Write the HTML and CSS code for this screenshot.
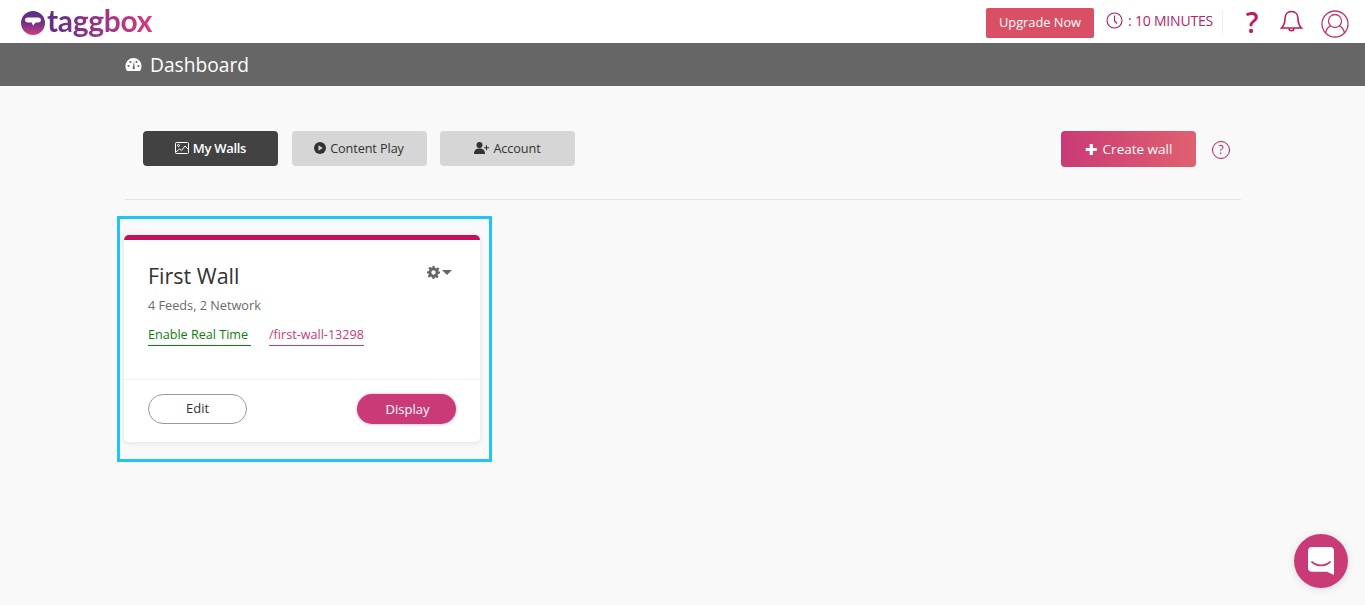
FILE: index.html
```html
<!DOCTYPE html>
<html lang="en">
<head>
<meta charset="utf-8">
<title>Taggbox Dashboard</title>
<link rel="stylesheet" href="styles.css">
</head>
<body>
<header class="topbar">
  <a class="logo">
    <svg class="logo-mark" width="24" height="24" viewBox="0 0 24 24">
      <defs><linearGradient id="lg" x1="0" y1="0" x2="0" y2="1"><stop offset="0" stop-color="#5b2d86"/><stop offset=".55" stop-color="#7a3088"/><stop offset="1" stop-color="#d0407f"/></linearGradient></defs>
      <circle cx="12" cy="12" r="12" fill="url(#lg)"/>
      <path d="M6.500 6.500h11a2.300 2.300 0 0 1 0 5h-2.800l-2.700 3.200-1.300-3.200H6.500a2.500 2.500 0 0 1 0-5z" fill="#fff"/>
    </svg>
    <span class="logo-text">taggbox</span>
  </a>
  <div class="top-actions">
    <a class="upgrade">Upgrade Now</a>
    <span class="timer">
      <svg width="17" height="17" viewBox="0 0 17 17" fill="none" stroke="#c2185b" stroke-width="1.100"><circle cx="8.500" cy="8.500" r="7.500"/><path d="M8.500 3.500v5.500l2.500 2.500"/></svg>
      <span>: 10 MINUTES</span>
    </span>
    <span class="sep"></span>
    <span class="help">?</span>
    <svg class="bell" width="23" height="24" viewBox="0 0 23 24" fill="none" stroke="#c2185b" stroke-width="1.600"><path d="M11.500 1.500c-4 0-6.500 3-6.500 7 0 5-1.500 7.500-3.500 9.500h20c-2-2-3.500-4.500-3.500-9.500 0-4-2.500-7-6.500-7z"/><path d="M9 18.500c0 3 5 3 5 0"/></svg>
    <svg class="user" width="28" height="28" viewBox="0 0 28 28" fill="none" stroke="#c2386f" stroke-width="1.300"><circle cx="14" cy="14" r="13"/><circle cx="14" cy="11" r="6.500"/><path d="M4.500 23c1-4.500 3.500-6.500 5.500-7.300M23.500 23c-1-4.500-3.500-6.500-5.500-7.300"/></svg>
  </div>
</header>
<div class="titlebar">
  <svg width="17" height="15" viewBox="0 0 17 15"><path d="M8.500 1a8 8 0 0 0-8 8c0 2 .6 3.700 1.600 5h12.800c1-1.300 1.600-3 1.600-5a8 8 0 0 0-8-8z" fill="#fff"/><circle cx="3.500" cy="9" r="1.100" fill="#666"/><circle cx="5.500" cy="5" r="1.100" fill="#666"/><circle cx="11.500" cy="5" r="1.100" fill="#666"/><circle cx="13.500" cy="9" r="1.100" fill="#666"/><path d="M7.500 12l1.500-8 .8 8z" fill="#666"/></svg>
  <h1>Dashboard</h1>
</div>
<main class="content">
  <div class="toolbar">
    <nav class="tabs">
      <a class="tab tab-active">
        <svg width="14" height="12" viewBox="0 0 14 12" fill="none" stroke="#fff"><rect x=".5" y=".5" width="13" height="11" rx="1"/><circle cx="3.500" cy="3.500" r="1" /><path d="M1 10l3.500-3 2 1.500L10 4l3.500 3.500"/></svg>
        My Walls
      </a>
      <a class="tab">
        <svg width="12" height="12" viewBox="0 0 12 12"><circle cx="6" cy="6" r="6" fill="#333"/><path d="M4.500 3.200l4.200 2.800-4.200 2.800z" fill="#d6d6d6"/></svg>
        Content Play
      </a>
      <a class="tab">
        <svg width="15" height="12" viewBox="0 0 15 12" fill="#333"><circle cx="5.500" cy="3" r="3"/><path d="M0 12c0-4 2-5.500 5.500-5.500S11 8 11 12z"/><path d="M10 5.200h1.900V3.300h1.100v1.900H15v1.100h-2v2h-1.100v-2H10z"/></svg>
        Account
      </a>
    </nav>
    <div class="create">
      <a class="create-btn"><span class="plus">&#x271A;</span>Create wall</a>
      <span class="qmark">?</span>
    </div>
  </div>
  <div class="highlight">
    <article class="card">
      <div class="card-body">
        <div class="card-head">
          <h2>First Wall</h2>
          <span class="gear">
            <svg width="13" height="13" viewBox="0 0 24 24" fill="#666"><path d="M10 0h4l.7 3.400 2.300 1 2.900-1.900 2.800 2.800-1.900 2.900 1 2.300L24 10v4l-3.400.7-1 2.300 1.900 2.900-2.800 2.800-2.900-1.900-2.300 1L13.800 24h-3.600l-.7-3.400-2.300-1-2.900 1.900-2.800-2.800 1.900-2.900-1-2.300L0 14v-4l3.400-.7 1-2.300-1.900-2.900 2.800-2.800 2.900 1.900 2.300-1zM12 8a4 4 0 1 0 0 8 4 4 0 0 0 0-8z"/></svg>
            <i class="caret"></i>
          </span>
        </div>
        <p class="meta">4 Feeds, 2 Network</p>
        <div class="links">
          <a class="link-green">Enable Real Time</a>
          <a class="link-pink">/first-wall-13298</a>
        </div>
      </div>
      <div class="card-foot">
        <a class="btn-edit">Edit</a>
        <a class="btn-display">Display</a>
      </div>
    </article>
  </div>
</main>
<button class="chat" aria-label="Chat">
  <svg width="26" height="28" viewBox="0 0 26 28"><path d="M4 0h18a4 4 0 0 1 4 4v24l-7-3.200H4a4 4 0 0 1-4-4V4a4 4 0 0 1 4-4z" fill="#fff"/><path d="M4 15c5 4.500 13 4.500 18 0" fill="none" stroke="#c93a76" stroke-width="1.800" stroke-linecap="round"/></svg>
</button>
</body>
</html>
```

FILE: styles.css
```css
* { box-sizing: border-box; }
html, body { margin: 0; padding: 0; }
body {
  height: 605px;
  overflow: hidden;
  background: #f9f9f9;
  font-family: "Open Sans", "Noto Sans", sans-serif;
  color: #333;
}
a { text-decoration: none; }

.topbar {
  height: 43px;
  background: #fff;
  display: flex;
  align-items: center;
  justify-content: space-between;
  padding: 0 16px 0 21px;
}
.logo { display: flex; align-items: flex-start; gap: 2px; height: 43px; }
.logo-mark { flex: none; margin-top: 11px; }
.logo-text {
  font-family: "Lato", sans-serif;
  font-weight: 700;
  font-size: 30px;
  line-height: 34px;
  letter-spacing: -0.3px;
  margin-top: 3px;
  background: linear-gradient(90deg, #5d2e86, #d83a80);
  -webkit-background-clip: text;
  background-clip: text;
  color: transparent;
}
.top-actions { display: flex; align-items: center; }
.upgrade {
  width: 108px;
  height: 30px;
  margin-top: 2px;
  padding-bottom: 2px;
  border-radius: 2px;
  background: #d95064;
  color: #fff;
  font-size: 12.800px;
  display: flex;
  align-items: center;
  justify-content: center;
}
.timer {
  display: flex;
  align-items: center;
  gap: 5px;
  margin-left: 12px;
  margin-top: -2px;
  color: #b5236a;
  font-size: 14px;
  letter-spacing: -0.2px;
}
.sep { width: 1px; height: 24px; background: #eee; margin-left: 9px; }
.help {
  width: 20px;
  margin-left: 19px;
  color: #c2185b;
  font-size: 28px;
  line-height: 36px;
  font-weight: 600;
  text-align: center;
}
.bell { margin-left: 18px; margin-top: 1px; }
.user { margin-left: 18px; margin-top: 5px; }

.titlebar {
  height: 43px;
  background: #666;
  color: #fff;
  display: flex;
  align-items: center;
  gap: 8px;
  padding-left: 125px;
}
.titlebar h1 { margin: 0; font-size: 19.200px; font-weight: 400; }

.content { padding: 45px 124px 0 125px; }
.toolbar {
  height: 69px;
  border-bottom: 1px solid #e5e5e5;
  display: flex;
  justify-content: space-between;
  padding: 0 0 0 18px;
}
.tabs { display: flex; gap: 13.500px; height: 35px; }
.tab {
  width: 135px;
  height: 35px;
  padding-bottom: 2px;
  border-radius: 4px;
  background: #d6d6d6;
  color: #333;
  font-size: 12.700px;
  letter-spacing: -0.1px;
  display: flex;
  align-items: center;
  justify-content: center;
  gap: 4px;
}
.tab-active { background: #424242; color: #fff; font-weight: 600; letter-spacing: -0.3px; font-size: 13px; }
.create { display: flex; align-items: flex-start; margin-right: 11px; }
.create-btn {
  width: 135px;
  height: 36px;
  border-radius: 4px;
  background: linear-gradient(90deg, #c93a76, #e0616f);
  color: #fff;
  font-size: 13.500px;
  display: flex;
  align-items: center;
  justify-content: center;
  gap: 5px;
}
.plus { font-size: 15px; line-height: 18px; }
.qmark {
  width: 18px;
  height: 18px;
  margin: 10px 0 0 16px;
  border: 1px solid #c2185b;
  border-radius: 50%;
  color: #c2185b;
  font-size: 12px;
  line-height: 16px;
  text-align: center;
}

.highlight {
  width: 375px;
  height: 246px;
  margin: 16px 0 0 -8px;
  border: 3px solid #1fc6f4;
  padding: 16px 9px 0 4px;
}
.card {
  height: 207px;
  background: #fff;
  border-top: 5px solid #c2105c;
  border-radius: 5px;
  box-shadow: 0 1px 6px rgba(0, 0, 0, 0.1);
  display: flex;
  flex-direction: column;
}
.card-body { height: 140px; padding: 20px 24px 0; border-bottom: 1px solid #f2f2f2; }
.card-head { display: flex; justify-content: space-between; }
.card-head h2 { margin: 0; font-size: 21.500px; line-height: 32px; font-weight: 400; color: #333; }
.gear { display: flex; align-items: center; gap: 2px; height: 16px; margin: 4px 4px 0 0; }
.caret { width: 0; height: 0; border: 5px solid transparent; border-top: 5px solid #666; border-bottom: 0; }
.meta { margin: 4px 0 0; font-size: 12.700px; line-height: 18px; color: #6b6b6b; }
.links { display: flex; gap: 18px; margin-top: 12px; font-size: 12.600px; line-height: 18px; }
.link-green { color: #0c800c; border-bottom: 1px solid #0c800c; padding-bottom: 1px; width: 103px; }
.link-pink { color: #c93a76; border-bottom: 1px solid #c93a76; padding-bottom: 1px; }
.card-foot {
  flex: 1;
  display: flex;
  justify-content: space-between;
  padding: 14px 24px 0 24px;
}
.btn-edit, .btn-display {
  width: 99px;
  height: 30px;
  border-radius: 15px;
  font-size: 13px;
  display: flex;
  align-items: center;
  justify-content: center;
}
.btn-edit { border: 1px solid #999; color: #333; padding-bottom: 3px; }
.btn-display { background: #c93a76; color: #fff; padding-left: 2px; box-shadow: 0 0 3px rgba(201, 58, 118, 0.5); }

.chat {
  position: fixed;
  right: 17px;
  bottom: 17px;
  width: 54px;
  height: 54px;
  border: 0;
  padding: 0;
  border-radius: 50%;
  background: #c93a76;
  box-shadow: 0 1px 8px rgba(0, 0, 0, 0.12);
  display: flex;
  align-items: center;
  justify-content: center;
}
```
